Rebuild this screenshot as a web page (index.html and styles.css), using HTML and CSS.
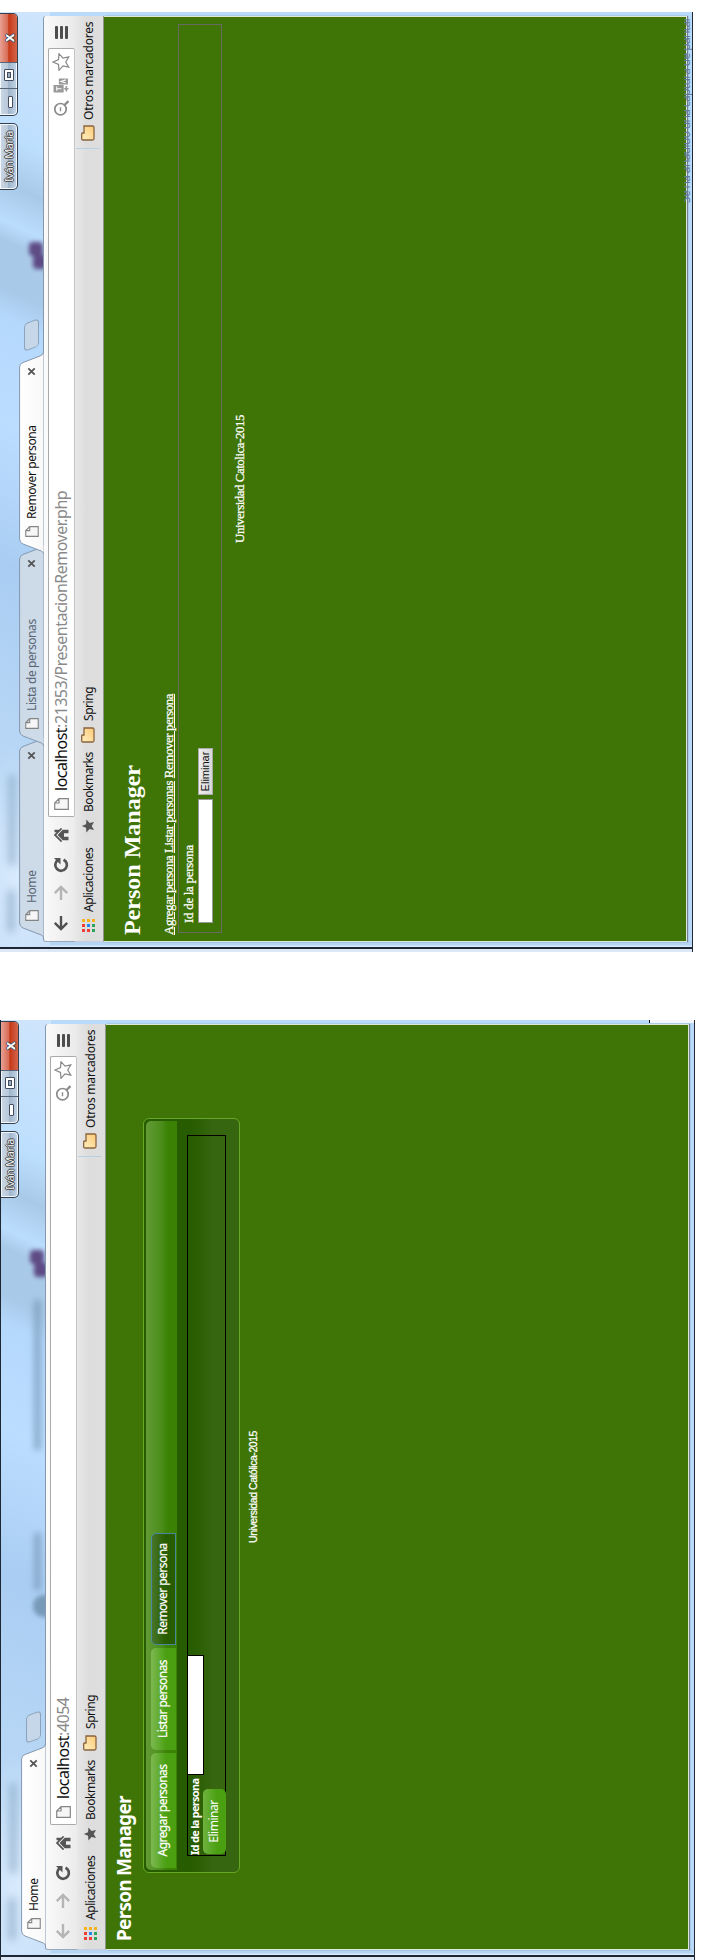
FILE: index.html
```
<!DOCTYPE html>
<html lang="es">
<head>
<meta charset="utf-8">
<title>Person Manager</title>
<link rel="stylesheet" href="styles.css">
</head>
<body>
<svg width="0" height="0" class="defs" aria-hidden="true">
  <defs>
    <linearGradient id="gActive" x1="0" y1="0" x2="0" y2="1"><stop offset="0" stop-color="#fff"/><stop offset="1" stop-color="#f8f8f8"/></linearGradient>
    <linearGradient id="gFolder" x1="0" y1="0" x2="1" y2="1"><stop offset="0" stop-color="#fff0c0"/><stop offset="1" stop-color="#fbc976"/></linearGradient>
    <symbol id="tab" viewBox="0 0 202 25"><path d="M0 24.5C2 24.5 2.500 23.500 3.500 21L10 4Q11.500.6 15 .6H187Q190 .6 191.500 4L198 21Q199.300 24.500 202 24.500"/></symbol>
    <symbol id="page" viewBox="0 0 12 15"><path d="M.7.7H7L11.300 5V14.300H.7ZM7 .7V5H11.300" fill="#f6f6f6" stroke="#858585" stroke-width="1.200"/></symbol>
    <symbol id="close" viewBox="0 0 9 9"><path d="M1.300 1.300L7.700 7.700M7.700 1.300L1.300 7.700" stroke="#555" stroke-width="1.800"/></symbol>
    <symbol id="back" viewBox="0 0 16 16"><path d="M15 8H2M8.200 1.800L2 8L8.200 14.200" fill="none" stroke="currentColor" stroke-width="2.400"/></symbol>
    <symbol id="reload" viewBox="0 0 16 16"><path d="M12.800 4.800A5.800 5.800 0 1 0 13.300 10.500" fill="none" stroke="#555" stroke-width="2.700"/><path d="M15 1V7.500H8.500Z" fill="#555"/></symbol>
    <symbol id="home" viewBox="0 0 16 16"><path d="M8 .8L.8 8L2 9.200L8 3.300L14 9.200L15.200 8L13.300 6.100V1.500H10.800V3.600ZM2.800 9.700L8 4.600L13.200 9.700V15.500H9.700V11H6.300V15.500H2.800Z" fill="#555"/></symbol>
    <symbol id="search" viewBox="0 0 16 16"><circle cx="6.800" cy="7.500" r="5.700" fill="none" stroke="#8b8b8b" stroke-width="1.700"/><path d="M11 11.500L15 15.500" stroke="#8b8b8b" stroke-width="2.300"/><path d="M4.800 7.500H8.800" stroke="#8b8b8b" stroke-width="1.400"/></symbol>
    <symbol id="star" viewBox="0 0 18 18"><path d="M9 1L11.400 6.500L17.300 7L12.800 11L14.200 16.800L9 13.700L3.800 16.800L5.200 11L.7 7L6.600 6.500Z"/></symbol>
    <symbol id="translate" viewBox="0 0 15 15"><path d="M.5 .5H7.500V10H.5ZM8 5.500H13.500V14H8Z" fill="#999"/><path d="M2 3.500H6M4 3.500V8M9.300 12L10.800 7.500L12.300 12" stroke="#fff" fill="none"/><path d="M1.500 12.500H6.500M4 10.500V14.500" stroke="#999" stroke-width="1.500"/></symbol>
    <symbol id="folder" viewBox="0 0 16 14"><path d="M1 3V11.500Q1 13 2.500 13H13.500Q15 13 15 11.500V3H8V1.500Q8 .7 7 .7H2Q1 .7 1 2Z" fill="url(#gFolder)" stroke="#8a633c" stroke-width="1.300"/></symbol>
    <symbol id="apps" viewBox="0 0 13 13"><path d="M0 0H3V3H0ZM5 0H8V3H5ZM0 5H3V8H0Z" fill="#ef3d35"/><path d="M5 5H8V8H5Z" fill="#2486ee"/><path d="M10 0H13V3H10ZM10 5H13V8H10ZM10 10H13V13H10Z" fill="#f7b218"/><path d="M0 0H3V3H0Z" fill="#ef3d35"/><path d="M0 10H3V13H0ZM5 10H8V13H5Z" fill="#2ca45c"/></symbol>
  </defs>
</svg>
<div class="viewport">
<div class="stage">

  <section class="window second">
    <div class="glass"><i class="blur a"></i><i class="blur b"></i><i class="blur e"></i><i class="blur c"></i><i class="blur d"></i><i class="blur purple"></i></div>
    <div class="user">Iván María</div>
    <div class="controls"><span class="min"><i></i></span><span class="max"><i></i></span><span class="quit">x</span></div>
    <div class="browser">
      <div class="tabs">
        <div class="tab active"><svg class="shape"><use href="#tab"/></svg><svg class="fav"><use href="#page"/></svg><span>Home</span><svg class="x"><use href="#close"/></svg></div>
        <i class="newtab"></i>
      </div>
      <div class="toolbar">
        <svg class="nav off"><use href="#back"/></svg><svg class="nav off flip"><use href="#back"/></svg><svg class="nav"><use href="#reload"/></svg><svg class="nav"><use href="#home"/></svg>
        <div class="omnibox"><svg class="fav"><use href="#page"/></svg><span class="url short"><b>localhost</b>:4054</span><svg class="act"><use href="#search"/></svg><svg class="act outline"><use href="#star"/></svg></div>
        <div class="menu"><i></i><i></i><i></i></div>
      </div>
      <div class="bookmarks"><svg class="apps"><use href="#apps"/></svg><span class="b1">Aplicaciones</span><svg class="bstar"><use href="#star"/></svg><span class="b2">Bookmarks</span><svg class="folder"><use href="#folder"/></svg><span class="b3">Spring</span><div class="others"><svg class="folder"><use href="#folder"/></svg><span>Otros marcadores</span></div></div>
      <main class="page styled">
        <h1>Person Manager</h1>
        <div class="panel">
          <nav class="navtabs"><a class="t1">Agregar personas</a><a class="t2">Listar personas</a><a class="t3 current">Remover persona</a></nav>
          <form class="box"><div class="line"><label>Id de la persona</label><i class="field"></i></div><div class="submit">Eliminar</div></form>
        </div>
        <footer>Universidad Católica-2015</footer>
      </main>
    </div>
    <i class="corner"></i>
  </section>

  <section class="window first">
    <div class="glass"><i class="blur a"></i><i class="blur b"></i><i class="blur purple"></i></div>
    <div class="user">Iván María</div>
    <div class="controls"><span class="min"><i></i></span><span class="max"><i></i></span><span class="quit">x</span></div>
    <div class="browser">
      <div class="tabs">
        <div class="tab"><svg class="shape"><use href="#tab"/></svg><svg class="fav"><use href="#page"/></svg><span>Home</span><svg class="x"><use href="#close"/></svg></div>
        <div class="tab"><svg class="shape"><use href="#tab"/></svg><svg class="fav"><use href="#page"/></svg><span>Lista de personas</span><svg class="x"><use href="#close"/></svg></div>
        <div class="tab active"><svg class="shape"><use href="#tab"/></svg><svg class="fav"><use href="#page"/></svg><span>Remover persona</span><svg class="x"><use href="#close"/></svg></div>
        <i class="newtab"></i>
      </div>
      <div class="toolbar">
        <svg class="nav"><use href="#back"/></svg><svg class="nav off flip"><use href="#back"/></svg><svg class="nav"><use href="#reload"/></svg><svg class="nav"><use href="#home"/></svg>
        <div class="omnibox"><svg class="fav"><use href="#page"/></svg><span class="url"><b>localhost</b>:21353/PresentacionRemover.php</span><svg class="act"><use href="#search"/></svg><svg class="act"><use href="#translate"/></svg><svg class="act outline"><use href="#star"/></svg></div>
        <div class="menu"><i></i><i></i><i></i></div>
      </div>
      <div class="bookmarks"><svg class="apps"><use href="#apps"/></svg><span class="b1">Aplicaciones</span><svg class="bstar"><use href="#star"/></svg><span class="b2">Bookmarks</span><svg class="folder"><use href="#folder"/></svg><span class="b3">Spring</span><div class="others"><svg class="folder"><use href="#folder"/></svg><span>Otros marcadores</span></div></div>
      <main class="page plain">
        <h1>Person Manager</h1>
        <nav class="links"><a>Agregar persona</a> <a>Listar personas</a> <a>Remover persona</a></nav>
        <form class="box"><label>Id de la persona</label><div class="line"><i class="field"></i><span class="submit">Eliminar</span></div></form>
        <footer>Universidad Catolica-2015</footer>
      </main>
    </div>
    <div class="toast">Se ha añadido una captura de pantal</div>
  </section>

</div>
</div>
</body>
</html>
```
FILE: styles.css
```
* { box-sizing: border-box; }
body { margin: 0; background: #fff; font-family: "Noto Sans", "Open Sans", sans-serif; }
.defs { position: absolute; }
i { display: block; }
svg { flex: none; display: block; }
.viewport { width: 706px; height: 1960px; overflow: hidden; }

/* Both windows are laid out upright, then turned a quarter to the left. */
.stage { width: 1960px; height: 706px; display: flex; align-items: flex-start; gap: 68px; transform-origin: 0 0; transform: translateY(1960px) rotate(-90deg); white-space: nowrap; }

.window { position: relative; flex: none; width: 940px; height: 693px; padding: 19px 4px 7px 10px; border-bottom: 1px solid #222a33; overflow: hidden;
  background: linear-gradient(90deg, #dce8f5 0, #dce8f5 3px, #1d2733 3px, #1d2733 5px, #e8f5ff 5px, #b4d5f4 7px, #b4d5f4 11px, transparent 11px), #b9dafa; }
.window.second { height: 695px; padding-top: 20px; border-top: 1px solid #1d2733; border-bottom-color: #222a33; }
.glass { position: absolute; inset: 0 0 0 5px; height: 50px; overflow: hidden;
  background: radial-gradient(ellipse 130px 60px at 70px 20px, #d9ebfd, transparent), linear-gradient(115deg, #c5def8 0, #b5d5f5 25%, #a9cdf2 40%, #bbddff 55%, #b4d8fc 66%, #a9c9e8 69%, #a9c9e8 74%, #bbddfd 76%, #a9c9e8 80%, #bddffe 85%, #cfe5fc 100%); }
.blur { position: absolute; filter: blur(4px); background: #6c8eac; opacity: .6; }
.blur.a { left: 15px; top: 8px; width: 42px; height: 6px; }
.blur.b { left: 82px; top: 9px; width: 90px; height: 6px; }
.blur.c { left: 365px; top: 33px; width: 57px; height: 7px; filter: blur(3px); }
.blur.d { left: 505px; top: 33px; width: 150px; height: 7px; filter: blur(3px); }
.blur.e { left: 338px; top: 32px; width: 22px; height: 18px; border-radius: 10px 10px 0 0; filter: blur(2px); opacity: .8; }
.blur.purple { left: 678px; top: 33px; width: 14px; height: 14px; background: #4b2b6c; opacity: .8; filter: blur(2px); box-shadow: 13px -4px 0 #4b2b6c; border-radius: 4px; }
.user, .controls { position: absolute; top: 0; height: 18px; border: 1px solid #34404e; border-top: 0; border-radius: 0 0 5px 5px; box-shadow: inset 0 0 0 1px #f3f8ff; background: linear-gradient(#cbd8e6, #b9c9da 45%, #9fb5cb 50%, #c4d6e8); }
.user { left: 762px; width: 67px; text-align: center; font-size: 11px; line-height: 17px; color: #f4f6f8; letter-spacing: -.4px; text-shadow: 1px 0 #444, -1px 0 #444, 0 1px #444, 0 -1px #444; }
.controls { left: 836px; width: 103px; display: flex; }
.controls span { display: flex; align-items: center; justify-content: center; width: 27px; border-right: 1px solid #566679; }
.controls .quit { width: 48px; border: 0; background: linear-gradient(#e8a193, #d76c56 45%, #c43818 52%, #d5654a); border-radius: 0 0 4px 0; color: #fff; font: bold 15px/17px "Liberation Sans", Arial, sans-serif; text-shadow: 1px 0 #444c60, -1px 0 #444c60, 0 1px #444c60, 0 -1px #444c60; }
.min i { width: 12px; height: 5px; margin-top: 4px; border: 1px solid #444c60; background: #fff; border-radius: 1px; }
.max i { width: 12px; height: 10px; border: 1px solid #444c60; background: #9ab; box-shadow: inset 0 0 0 2px #fff, inset 0 0 0 3px #444c60; border-radius: 1px; }
.toast { position: absolute; left: 749px; bottom: -2px; width: 190px; font-size: 12px; line-height: 16px; color: #5f7a9c; letter-spacing: -.65px; clip-path: inset(6px 0 0 0); }
.corner { position: absolute; right: 0; bottom: -1px; width: 3px; height: 46px; background: #f4f6fa; border-top: 1px solid #111; }

.browser { position: relative; display: flex; flex-direction: column; height: 668px; }
.tabs { display: flex; height: 25px; padding-left: 4px; margin-bottom: -1px; position: relative; }
.tab { position: relative; width: 202px; height: 25px; margin-right: -10px; display: flex; align-items: center; padding-left: 17px; font-size: 12px; letter-spacing: -.4px; color: #596675; flex: none; }
.shape { position: absolute; inset: 0; width: 202px; height: 25px; fill: #cddae8; stroke: #8498af; stroke-width: 1px; }
.tab .fav, .tab .x, .tab span { position: relative; }
.tab.active { color: #111; z-index: 1; }
.active .shape { fill: url(#gActive); stroke: #8498af; }
.fav { width: 11px; height: 14px; }
.tab span { margin-left: 7px; flex: 1; line-height: 20px; }
.x { width: 9px; height: 9px; margin-right: 15px; }
.newtab { width: 28px; height: 15px; margin: 5px 0 0 13px; background: #c5d7e8; border: 1px solid #8da3bb; border-radius: 4px; transform: skewX(20deg); }
.toolbar { display: flex; align-items: center; height: 32px; padding: 4px 10px 1px; border-top: 1px solid #8498af; border-left: 1px solid #9aa9b9; background: linear-gradient(90deg, transparent, rgba(255,255,255,.4) 50%, transparent), linear-gradient(#f9f9f9, #eaeaea); border-radius: 3px 3px 0 0; width: 926px; }
.nav { width: 16px; height: 16px; color: #505050; margin-right: 14px; }
.nav:nth-child(2) { margin-right: 12px; }
.nav:nth-child(4) { margin-right: 10px; }
.nav.off { color: #b5b5b5; }
.flip { transform: scaleX(-1); }
.omnibox { flex: 1; height: 27px; background: #fff; border: 1px solid #aaa; border-bottom-color: #c4c4c4; border-radius: 2px; display: flex; align-items: center; padding: 0 4px 0 6px; }
.omnibox .fav { width: 12px; height: 15px; }
.url { flex: 1; margin-left: 7px; font-size: 16px; line-height: 24px; letter-spacing: -.5px; color: #8a8a8a; }
.url b { font-weight: normal; color: #111; }
.act { width: 16px; height: 16px; margin-left: 7px; }
.outline { width: 18px; height: 18px; margin-left: 6px; fill: #fff; stroke: #888; stroke-width: 1.200px; }
.menu { width: 13px; margin-left: 9px; display: flex; flex-direction: column; gap: 2px; }
.menu i { height: 3px; background: #4d4d4d; border-radius: 1px; }
.bookmarks { display: flex; align-items: center; height: 29px; width: 926px; padding: 0 0 2px 9px; font-size: 12px; letter-spacing: -.45px; color: #111; background: linear-gradient(#e8e8e8, #dddddd 40%, #dedede); border-bottom: 1px solid #8f978b; border-left: 1px solid #ccd; }
.apps { width: 13px; height: 13px; }
.b1 { width: 86px; padding-left: 7px; }
.bstar { width: 14px; height: 14px; fill: #555; }
.b2 { width: 76px; padding-left: 7px; }
.folder { width: 16px; height: 14px; }
.b3 { padding-left: 6px; }
.others { margin-left: auto; display: flex; align-items: center; width: 133px; height: 24px; padding-left: 7px; border-left: 1px solid #b9cfe2; }
.others span { padding-left: 5px; letter-spacing: -.2px; }
.page { flex: 1; width: 926px; background: #3f7506; border: 1px solid #dfe8d8; border-top: 0; box-shadow: 0 1px 1px #6c7f93; color: #fff; }
h1 { margin: 0; }

.plain { font: 14px "Liberation Serif", "Times New Roman", serif; padding: 13px 6px 0; }
.plain h1 { font-size: 24px; line-height: 30px; }
.links { margin-top: 14px; font-size: 13px; line-height: 16px; letter-spacing: -.47px; }
.links, .plain label, footer { -webkit-text-stroke: .25px #fff; }
.links a { text-decoration: underline; }
.plain .box { height: 44px; margin: 1px 1px 0 2px; border: 1px solid #68695f; padding: 2px 9px; font-size: 13px; letter-spacing: -.3px; }
.plain label { display: block; line-height: 16px; }
.plain .line { display: flex; gap: 4px; margin-top: 1px; }
.plain .field { width: 124px; height: 15px; background: #fff; border: 1px solid #999; }
.plain .submit { width: 47px; height: 15px; background: linear-gradient(#eee, #d8d8d8); border: 1px solid #aaa; color: #111; font: 11px/13px "Liberation Sans", Arial, sans-serif; text-align: center; letter-spacing: 0; }
.plain footer { margin-top: 9px; text-align: center; font-size: 13px; letter-spacing: -.5px; line-height: 18px; }

.styled { padding: 5px 8px 0; }
.styled h1 { font-size: 19px; line-height: 27px; letter-spacing: -.75px; margin-bottom: 5px; }
.panel { width: 755px; height: 97px; margin: 1px 0 0 68px; border: 1px solid #66a825; border-radius: 6px; background: linear-gradient(#275c00 0, #275c00 50%, #36660f 72%); padding: 2px; }
.navtabs { display: flex; gap: 3px; height: 31px; padding: 5px 2px 1px; border-radius: 5px 5px 0 0; background: linear-gradient(#629b35, #4b8d1b 50%, #3a8104 70%); }
.navtabs a { height: 25px; border-radius: 5px 5px 0 0; background: linear-gradient(#7db952, #4ba012 60%); font-size: 12px; letter-spacing: -.55px; line-height: 23px; text-align: center; -webkit-text-stroke: .2px #fff; }
.t1 { width: 115px; } .t2 { width: 102px; }
.navtabs .current { width: 112px; background: linear-gradient(#487629, #275c00 60%); border: 1px solid #4b86a0; line-height: 22px; }
.styled .box { width: 721px; height: 39px; margin: 10px 0 0 14px; border: 1px solid #000; }
.styled .line { display: flex; height: 15px; }
.styled label { width: 80px; font-size: 11px; font-weight: bold; letter-spacing: -.72px; line-height: 13px; }
.styled .field { width: 120px; height: 17px; margin-top: -1px; background: #fff; border: 1px solid #000; }
.styled .submit { width: 65px; height: 23px; margin-left: 1px; border-radius: 5px; background: linear-gradient(#6fb23f, #4ba012 60%); font-size: 12px; letter-spacing: -.45px; line-height: 22px; text-align: center; }
.styled footer { margin-top: 5px; text-align: center; font: 10.5px/17px "Liberation Sans", Arial, sans-serif; letter-spacing: -.45px; }
```
